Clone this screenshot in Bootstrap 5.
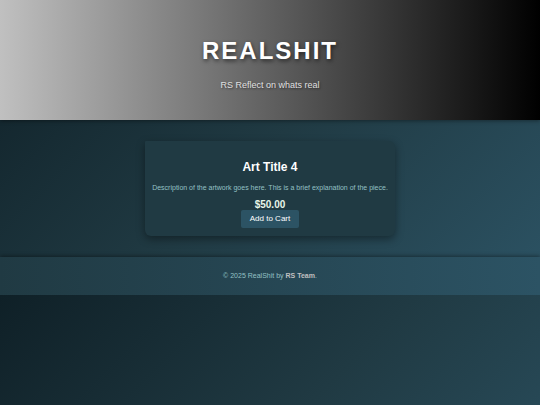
<!DOCTYPE html>
<html lang="en">
<head>
<meta charset="utf-8">
<meta name="viewport" content="width=device-width, initial-scale=1">
<title>RealShit</title>
<link href="https://cdn.jsdelivr.net/npm/bootstrap@5.3.0/dist/css/bootstrap.min.css" rel="stylesheet">
<style>
body{font-family:"Liberation Sans",Arial,sans-serif;font-size:8px;line-height:12px;color:#fff;background:linear-gradient(135deg,#0f2027,#203a43,#2c5364)}
.hero{padding:37px 16px 29px;background:linear-gradient(90deg,#c0c0c0,#000);box-shadow:0 1px 4px rgba(0,0,0,.4)}
.hero h1{margin-bottom:14px;font-size:24px;line-height:28px;letter-spacing:2px;text-shadow:1px 2px 4px rgba(0,0,0,.6)}
.tagline{font-size:9px;line-height:12px;color:#e0e0e0;text-shadow:1px 1px 2px rgba(0,0,0,.5)}
.gallery{padding:21px 16px}
.art{--bs-card-bg:#203a43;--bs-card-color:#fff;--bs-card-border-width:0;padding:18px 7px 8px;border-radius:1px 6px 6px 6px;box-shadow:0 3px 8px rgba(0,0,0,.4)}
.art h2{font-size:12px;line-height:16px}
.about{margin-bottom:7px;font-size:7px;line-height:10px;color:#94c0c4}
.price{font-size:10px;line-height:10px;color:#e8f5e9}
.buy{--bs-btn-color:#fff;--bs-btn-bg:#2c5364;--bs-btn-hover-color:#fff;--bs-btn-hover-bg:#37677c;--bs-btn-border-width:0;--bs-btn-font-size:8px;--bs-btn-line-height:12px;--bs-btn-padding-x:9px;--bs-btn-padding-y:3px;--bs-btn-border-radius:2px}
.site-foot{padding:13px 16px;font-size:7px;color:#94c0c4;background:linear-gradient(90deg,#203a43,#2c5364);box-shadow:0 -1px 4px rgba(0,0,0,.4)}
.site-foot a{color:#c0c0c0}
</style>
</head>
<body>
<header class="hero text-center position-relative">
  <h1 class="fw-bold text-uppercase">RealShit</h1>
  <p class="tagline mb-0">RS Reflect on whats real</p>
</header>
<main class="gallery d-flex justify-content-center">
  <article class="art card align-items-center text-center">
    <h2 class="fw-bold mb-2">Art Title 4</h2>
    <p class="about">Description of the artwork goes here. This is a brief explanation of the piece.</p>
    <p class="price fw-bold mb-0">$50.00</p>
    <button type="button" class="buy btn">Add to Cart</button>
  </article>
</main>
<footer class="site-foot text-center">
  <p class="mb-0">© 2025 RealShit by <a href="#" class="fw-bold text-decoration-none">RS Team</a>.</p>
</footer>
<script src="https://cdn.jsdelivr.net/npm/bootstrap@5.3.0/dist/js/bootstrap.bundle.min.js"></script>
</body>
</html>
